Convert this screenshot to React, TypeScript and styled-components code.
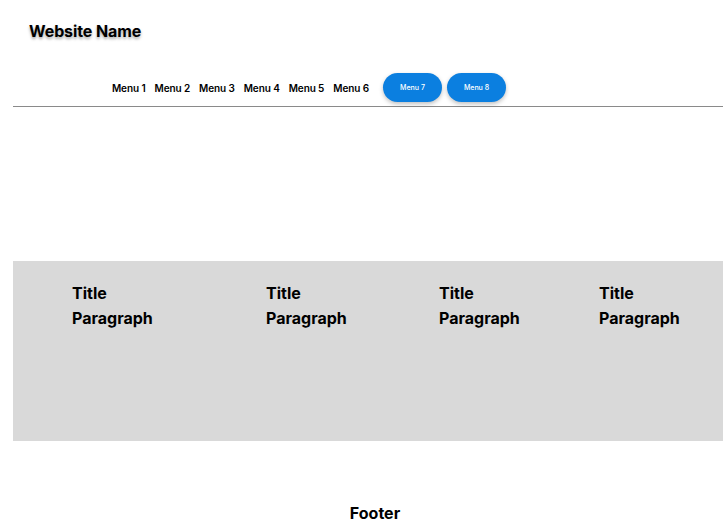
import React from 'react';
import styled, { createGlobalStyle } from 'styled-components';

const GlobalStyle = createGlobalStyle`
  body {
    margin: 0;
    background: #ffffff;
    font-family: Inter, "Liberation Sans", sans-serif;
    color: #000000;
  }
`;

const menus = ['Menu 1', 'Menu 2', 'Menu 3', 'Menu 4', 'Menu 5', 'Menu 6'];
const buttons = ['Menu 7', 'Menu 8'];
const columns = ['Title', 'Title', 'Title', 'Title'];

const App: React.FC = () => {
  return (
    <Page>
      <GlobalStyle />
      <Header>
        <SiteName>Website Name</SiteName>
        <Nav>
          {menus.map((m) => (
            <NavLink key={m}>{m}</NavLink>
          ))}
          <ButtonGroup>
            {buttons.map((b) => (
              <PillButton key={b}>{b}</PillButton>
            ))}
          </ButtonGroup>
        </Nav>
      </Header>
      <Hero />
      <Band>
        {columns.map((t, i) => (
          <Column key={i}>
            <ColumnTitle>{t}</ColumnTitle>
            <ColumnText>Paragraph</ColumnText>
          </Column>
        ))}
      </Band>
      <Footer>Footer</Footer>
    </Page>
  );
};

const Page = styled.div`
  display: flex;
  flex-direction: column;
  width: 710px;
  margin-left: 13px;
  min-height: 531px;
`;

const Header = styled.header`
  display: flex;
  flex-direction: column;
  border-bottom: 1px solid #8a8a8a;
`;

const SiteName = styled.h1`
  margin: 21px 0 0 16px;
  font-size: 16px;
  line-height: 20px;
  font-weight: 700;
  letter-spacing: -0.1px;
  text-shadow: 0 2px 3px rgba(0, 0, 0, 0.35);
`;

const Nav = styled.nav`
  display: flex;
  align-items: center;
  padding-left: 99px;
  margin-top: 32px;
  margin-bottom: 4px;
  height: 29px;
`;

const NavLink = styled.span`
  font-size: 10px;
  font-weight: 600;
  letter-spacing: -0.1px;
  margin-right: 9px;
  white-space: nowrap;
`;

const ButtonGroup = styled.div`
  display: flex;
  gap: 5px;
  margin-left: 5px;
`;

const PillButton = styled.button`
  width: 59px;
  height: 29px;
  border: none;
  border-radius: 15px;
  background: #0b7fe0;
  color: #ffffff;
  font-family: Inter, "Liberation Sans", sans-serif;
  font-size: 7px;
  font-weight: 500;
  box-shadow: 0 2px 4px rgba(0, 0, 0, 0.25);
`;

const Hero = styled.div`
  height: 154px;
`;

const Band = styled.section`
  display: grid;
  grid-template-columns: 194px 173px 160px 1fr;
  padding: 23px 0 0 59px;
  height: 180px;
  box-sizing: border-box;
  background: #d9d9d9;
`;

const Column = styled.div`
  display: flex;
  flex-direction: column;
  gap: 6px;
`;

const ColumnTitle = styled.h2`
  margin: 0;
  font-size: 16px;
  line-height: 19px;
  font-weight: 700;
`;

const ColumnText = styled.p`
  margin: 0;
  font-size: 16px;
  line-height: 19px;
  font-weight: 700;
`;

const Footer = styled.footer`
  display: flex;
  justify-content: center;
  padding-top: 62px;
  padding-left: 14px;
  font-size: 16px;
  font-weight: 700;
`;

export default App;
